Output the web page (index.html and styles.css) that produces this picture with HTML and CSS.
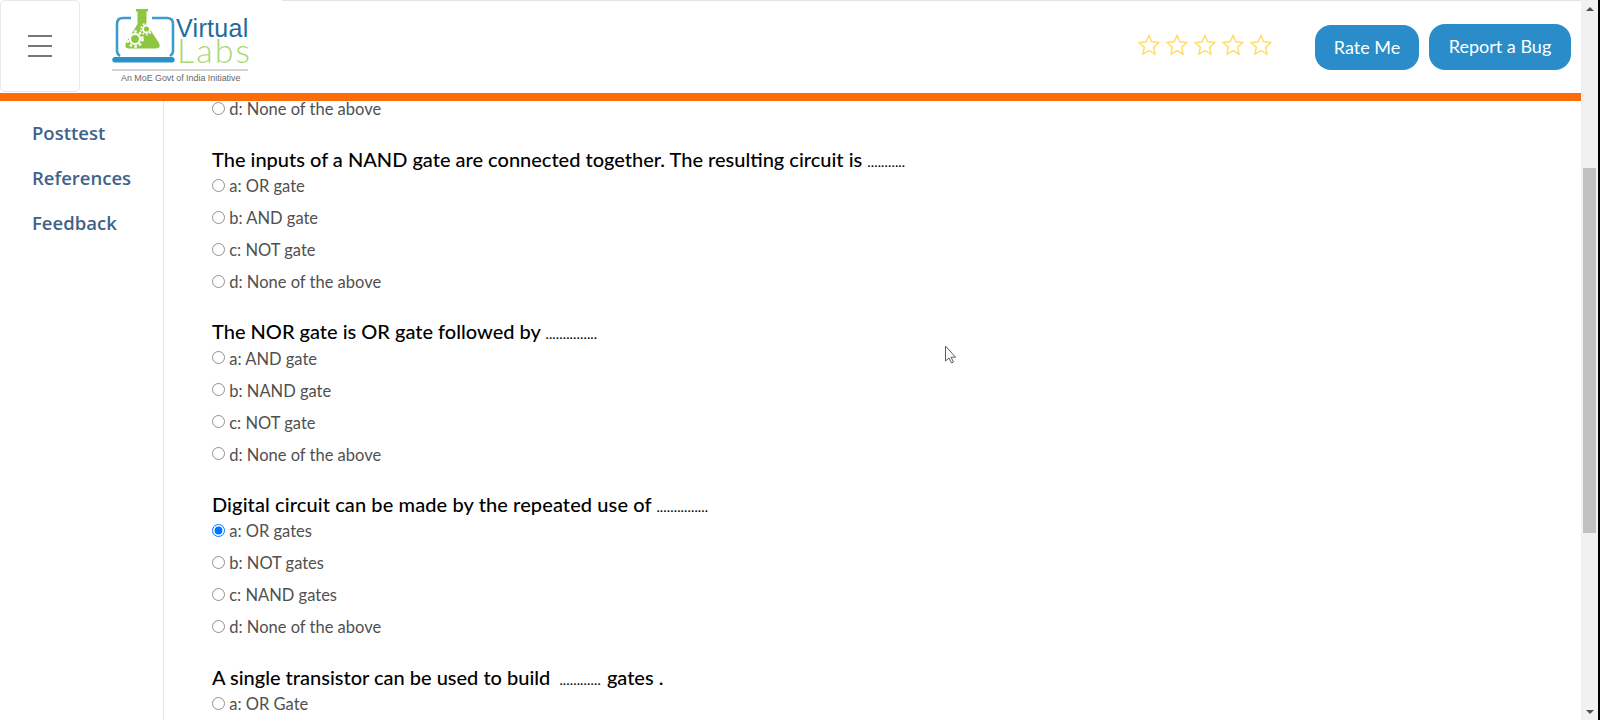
FILE: index.html
```html
<!DOCTYPE html>
<html lang="en">

<head>
    <meta charset="UTF-8">
    <title>Posttest</title>
    <link rel="stylesheet" href="styles.css">
</head>

<body>
    <div class="window">
        <div class="page">
            <header class="topbar">
                <button class="menu-btn" aria-label="menu">
                    <span></span>
                    <span></span>
                    <span></span>
                </button>
                <a class="logo" href="#">
                    <svg width="170" height="90" viewBox="0 0 170 90">
                        <!-- laptop -->
                        <path d="M31 18H23q-6 0-6 6v27q0 3 3 5M52 18h15q6 0 6 6v27q0 3-3 5" fill="none" stroke="#3d9bd1" stroke-width="2.6"/>
                        <path d="M15 57h57a2.700 2.700 0 0 1 0 5.400H15a2.700 2.700 0 0 1 0-5.400z" fill="#2f8fc7"/>
                        <!-- flask -->
                        <path d="M36 9h12v2.500h-1.500V24L59 43q2.500 5-3 5.500H29q-5.500-.5-3-5.500L37.500 24V11.500H36z" fill="#8fc63f"/>
                        <circle cx="35" cy="39" r="5" fill="none" stroke="#fff" stroke-width="2.200"/>
                        <circle cx="35" cy="39" r="7.500" fill="none" stroke="#fff" stroke-width="2.500" stroke-dasharray="2.500 2.400"/>
                        <circle cx="46.500" cy="29" r="3.500" fill="none" stroke="#fff" stroke-width="1.800"/>
                        <circle cx="46.500" cy="29" r="5.400" fill="none" stroke="#fff" stroke-width="1.800" stroke-dasharray="1.800 1.700"/>
                        <!-- name -->
                        <text class="logo-virtual" x="76" y="37">Virtual</text>
                        <text class="logo-labs" x="77" y="63">Labs</text>
                        <rect x="12" y="69.500" width="136" height="1" fill="#aaa"/>
                        <text class="logo-tag" x="21" y="80.500">An MoE Govt of India Initiative</text>
                    </svg>
                </a>
                <div class="topbar-right">
                    <div class="stars">
                        <svg class="star" viewBox="0 0 24 24"><path d="M12 2.500l2.900 6.300 6.800.8-5 4.700 1.300 6.800-6-3.400-6 3.400 1.300-6.800-5-4.700 6.800-.8z"/></svg>
                        <svg class="star" viewBox="0 0 24 24"><path d="M12 2.500l2.900 6.300 6.800.8-5 4.700 1.300 6.800-6-3.400-6 3.400 1.300-6.800-5-4.700 6.800-.8z"/></svg>
                        <svg class="star" viewBox="0 0 24 24"><path d="M12 2.500l2.900 6.300 6.800.8-5 4.700 1.300 6.800-6-3.400-6 3.400 1.300-6.800-5-4.700 6.800-.8z"/></svg>
                        <svg class="star" viewBox="0 0 24 24"><path d="M12 2.500l2.900 6.300 6.800.8-5 4.700 1.300 6.800-6-3.400-6 3.400 1.300-6.800-5-4.700 6.800-.8z"/></svg>
                        <svg class="star" viewBox="0 0 24 24"><path d="M12 2.500l2.900 6.300 6.800.8-5 4.700 1.300 6.800-6-3.400-6 3.400 1.300-6.800-5-4.700 6.800-.8z"/></svg>
                    </div>
                    <a class="btn btn-rate" href="#">Rate Me</a>
                    <a class="btn btn-bug" href="#">Report a Bug</a>
                </div>
            </header>

            <main class="main">
                <nav class="sidebar">
                    <a href="#">Posttest</a>
                    <a href="#">References</a>
                    <a href="#">Feedback</a>
                </nav>

                <div class="quiz">
                    <div class="question question-cut">
                        <label class="option"><input type="radio" name="q0"> d: None of the above</label>
                    </div>

                    <div class="question">
                        <h3>The inputs of a NAND gate are connected together. The resulting circuit is <span class="dots">...........</span></h3>
                        <label class="option"><input type="radio" name="q1"> a: OR gate</label>
                        <label class="option"><input type="radio" name="q1"> b: AND gate</label>
                        <label class="option"><input type="radio" name="q1"> c: NOT gate</label>
                        <label class="option"><input type="radio" name="q1"> d: None of the above</label>
                    </div>

                    <div class="question">
                        <h3>The NOR gate is OR gate followed by <span class="dots">...............</span></h3>
                        <label class="option"><input type="radio" name="q2"> a: AND gate</label>
                        <label class="option"><input type="radio" name="q2"> b: NAND gate</label>
                        <label class="option"><input type="radio" name="q2"> c: NOT gate</label>
                        <label class="option"><input type="radio" name="q2"> d: None of the above</label>
                    </div>

                    <div class="question">
                        <h3 class="wide">Digital circuit can be made by the repeated use of <span class="dots">...............</span></h3>
                        <label class="option"><input type="radio" name="q3" checked> a: OR gates</label>
                        <label class="option"><input type="radio" name="q3"> b: NOT gates</label>
                        <label class="option"><input type="radio" name="q3"> c: NAND gates</label>
                        <label class="option"><input type="radio" name="q3"> d: None of the above</label>
                    </div>

                    <div class="question">
                        <h3>A single transistor can be used to build <span class="dots dots-gap">............</span> gates .</h3>
                        <label class="option"><input type="radio" name="q4"> a: OR Gate</label>
                    </div>
                </div>
            </main>
        </div>

        <div class="scrollbar">
            <span class="arrow arrow-up"></span>
            <div class="track">
                <div class="thumb"></div>
            </div>
            <span class="arrow arrow-down"></span>
        </div>

        <!-- mouse pointer -->
        <svg class="pointer" width="14" height="20" viewBox="0 0 14 20">
            <path d="M1.500 1v15l3.500-3 2.500 5 2-1-2.500-4.800h4.500z" fill="#fff" stroke="#5a5a6a" stroke-width="1"/>
        </svg>
    </div>
</body>

</html>
```

FILE: styles.css
```css
* {
    margin: 0;
    padding: 0;
    box-sizing: border-box;
}

html,
body {
    height: 100%;
    overflow: hidden;
}

body {
    font-family: "Lato", "Liberation Sans", sans-serif;
    color: #505050;
    background-color: #fff;
}

.window {
    display: flex;
    height: 720px;
    position: relative;
}

.page {
    flex: 1;
    min-width: 0;
    display: flex;
    flex-direction: column;
}

/* header */
.topbar {
    height: 101px;
    flex: none;
    display: flex;
    border-bottom: 8px solid #ff6b06;
}

.menu-btn {
    width: 80px;
    height: 92px;
    background-color: #fff;
    border: 1px solid #e8e8e8;
    border-radius: 5px;
    display: flex;
    flex-direction: column;
    justify-content: center;
    align-items: center;
    gap: 8px;
}

.menu-btn span {
    display: block;
    width: 24px;
    height: 2px;
    background-color: #777;
}

.logo {
    width: 202px;
    flex: none;
    padding-left: 20px;
    display: block;
}

.logo svg {
    display: block;
}

.logo-virtual {
    font-family: "Liberation Sans", sans-serif;
    font-size: 25px;
    letter-spacing: 0.300px;
    fill: #1d6c9c;
}

.logo-labs {
    font-family: "Lato", sans-serif;
    font-weight: 300;
    font-size: 34px;
    letter-spacing: 2px;
    fill: #a9d873;
}

.logo-tag {
    font-family: "Liberation Sans", sans-serif;
    font-size: 8.900px;
    fill: #666;
}

.topbar-right {
    flex: 1;
    display: flex;
    align-items: center;
    justify-content: flex-end;
    padding-right: 10px;
    border-top: 1px solid #e4e4e4;
}

.stars {
    display: flex;
    gap: 4px;
    margin-right: 42px;
    margin-top: -4px;
}

.star {
    width: 24px;
    height: 24px;
    fill: none;
    stroke: #ffdc6b;
    stroke-width: 1.500;
}

.btn {
    display: flex;
    align-items: center;
    justify-content: center;
    border-radius: 16px;
    background-color: #2a8dc9;
    color: #fff;
    font-family: "Lato", sans-serif;
    font-size: 18px;
    text-decoration: none;
}

.btn-rate {
    width: 104px;
    height: 45px;
    margin-top: 1px;
    margin-right: 10px;
    padding-bottom: 2px;
}

.btn-bug {
    width: 142px;
    height: 46px;
    padding-bottom: 3px;
}

/* body of the page */
.main {
    flex: 1;
    min-height: 0;
    display: flex;
    overflow: hidden;
}

.sidebar {
    width: 164px;
    flex: none;
    padding: 16.500px 0 0 32px;
    border-right: 1px solid #e6e6e6;
    display: flex;
    flex-direction: column;
    gap: 15px;
}

.sidebar a {
    font-family: "Open Sans", sans-serif;
    font-weight: 600;
    font-size: 18.500px;
    line-height: 30px;
    color: #3f6289;
    text-decoration: none;
}

.quiz {
    flex: 1;
    padding-left: 48px;
    margin-top: -4px;
}

.question {
    margin-bottom: 25.200px;
}

.question-cut {
    margin-bottom: 25.500px;
}

.question h3 {
    font-size: 20px;
    font-weight: 500;
    line-height: 24px;
    margin-bottom: 0.500px;
    color: #000;
}

.question h3.wide {
    letter-spacing: 0.100px;
}

.dots {
    font-size: 14px;
    letter-spacing: 0.150px;
}

.dots-gap {
    margin: 0 1px 0 4px;
}

.option {
    display: flex;
    align-items: center;
    height: 24px;
    margin-bottom: 8px;
    font-size: 16.500px;
    white-space: pre;
}

.option input {
    width: 13px;
    height: 13px;
    margin: 0 0 2px 0;
}

.option input:not(:checked) {
    opacity: 0.8;
}

/* scrollbar */
.scrollbar {
    width: 19px;
    flex: none;
    background-color: #f1f1f1;
    border-right: 2px solid #000;
    display: flex;
    flex-direction: column;
}

.track {
    flex: 1;
    padding: 151px 2px 0;
}

.thumb {
    height: 365px;
    background-color: #c1c1c1;
}

.arrow {
    flex: none;
    height: 17px;
    display: flex;
    align-items: center;
    justify-content: center;
}

.arrow::before {
    content: "";
    border-left: 4px solid transparent;
    border-right: 4px solid transparent;
}

.arrow-up::before {
    border-bottom: 4px solid #505050;
}

.arrow-down::before {
    border-top: 4px solid #505050;
}

.pointer {
    position: absolute;
    left: 944px;
    top: 345px;
}
```
